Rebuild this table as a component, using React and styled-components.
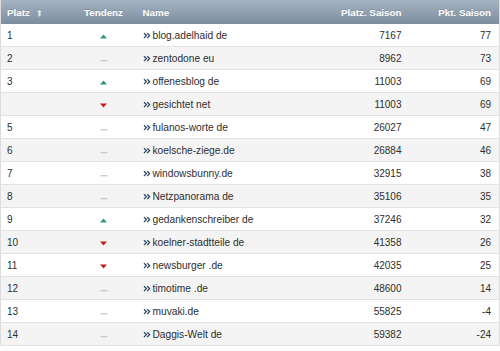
import React from 'react';
import styled, { createGlobalStyle } from 'styled-components';

const Global = createGlobalStyle`
  body {
    margin: 0;
    background: #fff;
    font-family: "Liberation Sans", Arial, sans-serif;
  }
`;

const Table = styled.table`
  width: 500px;
  border-collapse: collapse;
  table-layout: fixed;
  font-size: 10px;
  color: #2e2e2e;
  border-left: 1px solid #dcdcdc;
  border-right: 1px solid #dcdcdc;
  border-bottom: 1px solid #dcdcdc;
`;

const Head = styled.th`
  height: 24px;
  padding: 0 ${p => (p.$align === 'right' ? '8px' : '6px')};
  text-align: ${p => p.$align || 'left'};
  background: linear-gradient(#a6b4c2, #7b8d9e);
  color: #fff;
  font-weight: bold;
  font-size: 9.8px;
  text-shadow: 0 -1px 0 rgba(0,0,0,0.12);
  white-space: nowrap;
`;

const SortMark = styled.span`
  margin-left: 6px;
  font-size: 8px;
  color: #dfe5ea;
`;

const Row = styled.tr`
  background: ${p => (p.$odd ? '#f4f4f4' : '#fff')};
`;

const Cell = styled.td`
  height: 22px;
  padding: 0 ${p => (p.$align === 'right' ? '8px' : '6px')};
  text-align: ${p => p.$align || 'left'};
  border-bottom: 1px solid #e3e3e3;
  white-space: nowrap;
  font-size: 10px;
`;

const Name = styled.span`
  display: inline-flex;
  align-items: center;
  gap: 2px;
  font-size: 10.2px;
`;

const Chevron = () => (
  <svg width="8" height="7" viewBox="0 0 8 7">
    <path d="M1 1.2 L3.4 3.6 L1 6 M4.2 1.2 L6.6 3.6 L4.2 6" fill="none" stroke="#2f4a68" strokeWidth="1.3" />
  </svg>
);

const Trend = ({ dir }) => {
  if (dir === 'up')
    return (
      <svg width="7" height="5" viewBox="0 0 7 5"><polygon points="0,4.5 7,4.5 3.5,0.5" fill="#2e9a6d" /></svg>
    );
  if (dir === 'down')
    return (
      <svg width="7" height="5" viewBox="0 0 7 5"><polygon points="0,0.5 7,0.5 3.5,4.5" fill="#c21e1e" /></svg>
    );
  return (
    <svg width="8" height="3" viewBox="0 0 8 3"><rect x="0.5" y="1" width="7" height="1.4" fill="#cccccc" /></svg>
  );
};

const rows = [
  ['1', 'up', 'blog.adelhaid de', '7167', '77'],
  ['2', 'same', 'zentodone eu', '8962', '73'],
  ['3', 'up', 'offenesblog de', '11003', '69'],
  ['', 'down', 'gesichtet net', '11003', '69'],
  ['5', 'same', 'fulanos-worte de', '26027', '47'],
  ['6', 'same', 'koelsche-ziege.de', '26884', '46'],
  ['7', 'same', 'windowsbunny.de', '32915', '38'],
  ['8', 'same', 'Netzpanorama de', '35106', '35'],
  ['9', 'up', 'gedankenschreiber de', '37246', '32'],
  ['10', 'down', 'koelner-stadtteile de', '41358', '26'],
  ['11', 'down', 'newsburger .de', '42035', '25'],
  ['12', 'same', 'timotime .de', '48600', '14'],
  ['13', 'same', 'muvaki.de', '55825', '-4'],
  ['14', 'same', 'Daggis-Welt de', '59382', '-24'],
];

export default function App() {
  return (
    <>
      <Global />
      <Table>
        <colgroup>
          <col style={{ width: 70 }} />
          <col style={{ width: 66 }} />
          <col />
          <col style={{ width: 130 }} />
          <col style={{ width: 90 }} />
        </colgroup>
        <thead>
          <tr>
            <Head>Platz<SortMark>⬆</SortMark></Head>
            <Head $align="center">Tendenz</Head>
            <Head>Name</Head>
            <Head $align="right">Platz. Saison</Head>
            <Head $align="right">Pkt. Saison</Head>
          </tr>
        </thead>
        <tbody>
          {rows.map((r, i) => (
            <Row key={i} $odd={i % 2 === 1}>
              <Cell>{r[0]}</Cell>
              <Cell $align="center"><Trend dir={r[1]} /></Cell>
              <Cell>
                <Name><Chevron />{r[2]}</Name>
              </Cell>
              <Cell $align="right">{r[3]}</Cell>
              <Cell $align="right">{r[4]}</Cell>
            </Row>
          ))}
        </tbody>
      </Table>
    </>
  );
}
